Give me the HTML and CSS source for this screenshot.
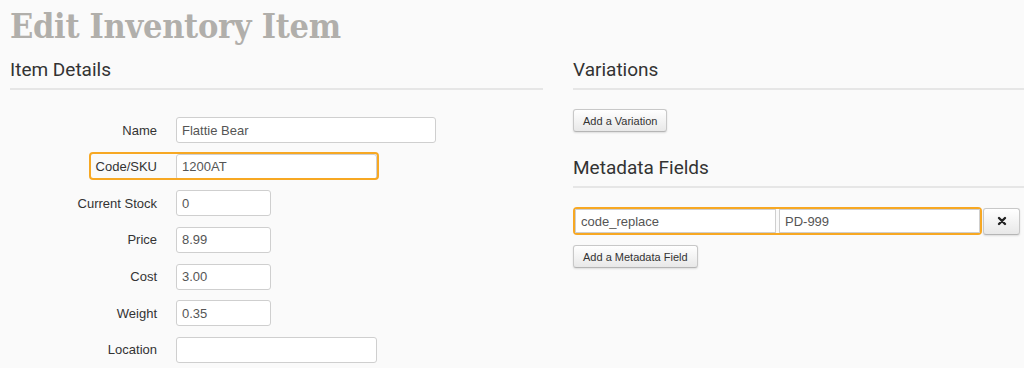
FILE: index.html
```html
<!DOCTYPE html>
<html>
<head>
    <title>Edit Inventory Item</title>
    <link rel="stylesheet" href="styles.css">
</head>
<body>
    <h1 class="page-title">Edit Inventory Item</h1>

    <div class="columns">
        <!-- Left column: item details form -->
        <div class="column">
            <h2 class="section-title">Item Details</h2>
            <div class="item-form">
                <div class="form-row">
                    <label for="name">Name</label>
                    <input type="text" id="name" class="field wide" value="Flattie Bear">
                </div>
                <div class="form-row flagged">
                    <label for="sku">Code/SKU</label>
                    <input type="text" id="sku" class="field medium" value="1200AT">
                </div>
                <div class="form-row">
                    <label for="stock">Current Stock</label>
                    <input type="text" id="stock" class="field short" value="0">
                </div>
                <div class="form-row">
                    <label for="price">Price</label>
                    <input type="text" id="price" class="field short" value="8.99">
                </div>
                <div class="form-row">
                    <label for="cost">Cost</label>
                    <input type="text" id="cost" class="field short" value="3.00">
                </div>
                <div class="form-row">
                    <label for="weight">Weight</label>
                    <input type="text" id="weight" class="field short" value="0.35">
                </div>
                <div class="form-row">
                    <label for="location">Location</label>
                    <input type="text" id="location" class="field medium" value="">
                </div>
            </div>
        </div>

        <!-- Right column: variations and metadata -->
        <div class="column">
            <h2 class="section-title">Variations</h2>
            <div class="section-body">
                <button class="btn">Add a Variation</button>
            </div>

            <h2 class="section-title second">Metadata Fields</h2>
            <div class="section-body">
                <div class="meta-row">
                    <div class="meta-pair">
                        <input type="text" class="field meta" value="code_replace">
                        <input type="text" class="field meta" value="PD-999">
                    </div>
                    <button class="btn remove" title="Remove">
                        <svg width="10" height="10" viewBox="0 0 10 10">
                            <path d="M2 2 L8 8 M8 2 L2 8" stroke="#222" stroke-width="2.4" stroke-linecap="round"/>
                        </svg>
                    </button>
                </div>
                <button class="btn">Add a Metadata Field</button>
            </div>
        </div>
    </div>
</body>
</html>
```

FILE: styles.css
```css
body {
    margin: 0;
    padding: 0 0 0 10px;
    background-color: #fafafa;
    font-family: "Liberation Sans", Arial, sans-serif;
    color: #333;
    overflow: hidden;
}
.page-title {
    margin: 6px 0 0 0;
    font-family: "DejaVu Serif Condensed", "DejaVu Serif", serif;
    font-weight: bold;
    font-size: 34px;
    line-height: 40px;
    letter-spacing: -0.3px;
    color: #b1afab;
}
.columns {
    display: grid;
    grid-template-columns: 533px 1fr;
    column-gap: 30px;
    margin-top: 12px;
}
.section-title {
    margin: 0;
    padding-bottom: 6px;
    border-bottom: 2px solid #e6e6e6;
    font-family: Roboto, "Liberation Sans", sans-serif;
    font-weight: normal;
    font-size: 19px;
    line-height: 24px;
    color: #333;
}
.section-title.second {
    margin-top: 24px;
}
.section-body {
    padding-top: 19px;
}

/* Item details form */
.item-form {
    display: flex;
    flex-direction: column;
    gap: 10.67px;
    padding-top: 27px;
}
.form-row {
    display: flex;
    align-items: center;
    height: 26px;
    position: relative;
}
.form-row label {
    width: 147px;
    margin-right: 19px;
    text-align: right;
    font-size: 13px;
}
.form-row.flagged::before {
    content: "";
    position: absolute;
    left: 79px;
    top: -2px;
    width: 290px;
    height: 28px;
    box-sizing: border-box;
    border: 2px solid #f7a823;
    border-radius: 4px;
    pointer-events: none;
    z-index: 1;
}
.field {
    box-sizing: border-box;
    height: 26px;
    padding: 0 5px;
    border: 1px solid #cfcfcf;
    border-radius: 3px;
    background: #fff;
    font-family: "Liberation Sans", Arial, sans-serif;
    font-size: 13px;
    color: #555;
    outline: none;
}
.field.wide {
    width: 260px;
}
.field.medium {
    width: 201px;
}
.field.short {
    width: 95px;
}

/* Buttons */
.btn {
    display: block;
    height: 23px;
    padding: 0 9px;
    border: 1px solid #c8c8c8;
    border-bottom-color: #b5b5b5;
    border-radius: 3px;
    background: linear-gradient(#ffffff, #e8e8e8);
    box-shadow: 0 1px 2px rgba(0, 0, 0, 0.12);
    font-family: "Liberation Sans", Arial, sans-serif;
    font-size: 11px;
    color: #333;
}

/* Metadata rows */
.meta-row {
    display: flex;
    align-items: center;
    margin-bottom: 10px;
}
.meta-pair {
    display: flex;
    gap: 3px;
    border: 2px solid #f7a823;
    border-radius: 4px;
}
.field.meta {
    width: 201px;
    height: 24px;
    border-radius: 0;
}
.btn.remove {
    display: flex;
    align-items: center;
    justify-content: center;
    width: 37px;
    height: 27px;
    margin-left: 1px;
    padding: 0;
}
```
